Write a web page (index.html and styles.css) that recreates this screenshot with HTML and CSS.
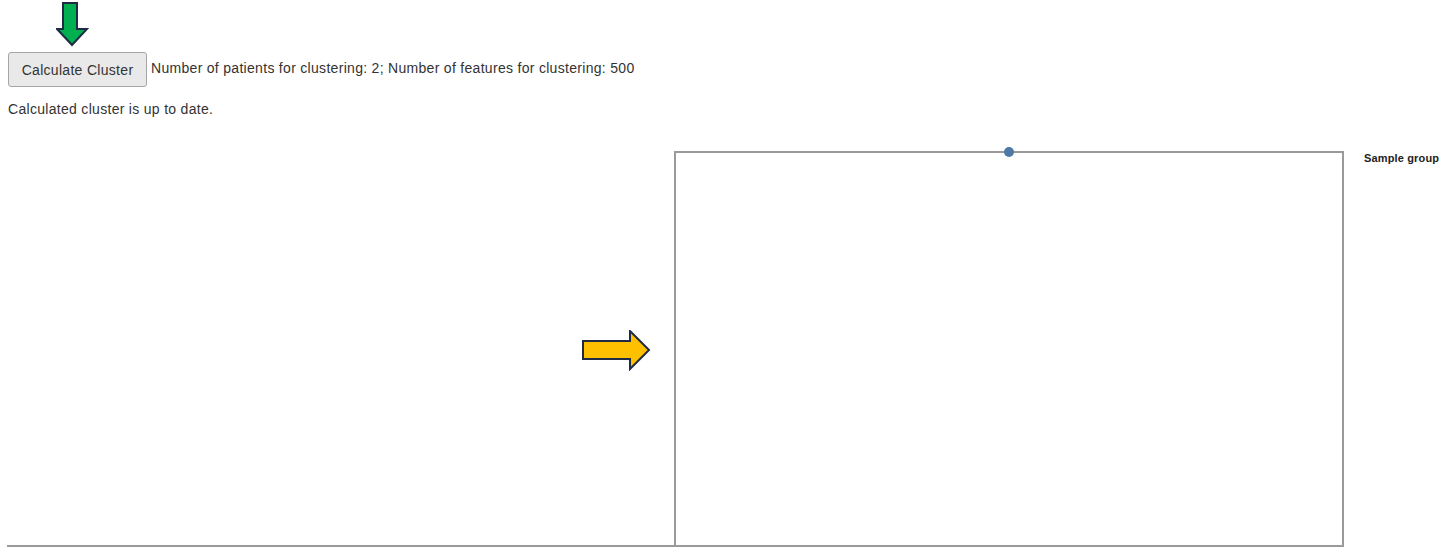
FILE: index.html
```html
<!DOCTYPE html>
<html>
<head>
<meta charset="utf-8">
<link rel="stylesheet" href="styles.css">
</head>
<body>
<div class="page">
  <div class="toolbar">
    <button class="btn">Calculate Cluster</button>
    <span class="info">Number of patients for clustering: 2; Number of features for clustering: 500</span>
  </div>
  <div class="status">Calculated cluster is up to date.</div>
  <div class="chart">
    <div class="plotarea">
      <div class="frame"><span class="dot"></span></div>
    </div>
    <div class="legend">Sample group</div>
  </div>
</div>
<svg class="arrow-down" width="33" height="45" viewBox="0 0 33 45"><path d="M7,1 H21 V27 H31 L16,43 L1,27 H7 Z" fill="#00b050" stroke="#1f2a44" stroke-width="2" stroke-linejoin="miter"/></svg>
<svg class="arrow-right" width="69" height="41" viewBox="0 0 69 41"><path d="M1,11 H48 V1 L67,20 L48,39 V29 H1 Z" fill="#ffc000" stroke="#1f2a44" stroke-width="2" stroke-linejoin="miter"/></svg>
</body>
</html>
```
FILE: styles.css
```css
html, body { margin: 0; padding: 0; background: #fff; }
body { font-family: "Liberation Sans", Arial, sans-serif; font-size: 14px; color: #333; letter-spacing: 0.3px; }
.page { padding: 52px 0 0 8px; }
.toolbar { display: flex; align-items: center; gap: 4px; }
.btn {
  font-family: "Liberation Sans", Arial, sans-serif;
  font-size: 14px;
  letter-spacing: 0.3px;
  color: #333;
  height: 35px;
  width: 139px;
  padding: 0;
  background: #e9e9e9;
  border: 1px solid #a6a6a6;
  border-radius: 3px;
  box-sizing: border-box;
  padding-top: 1px;
}
.info { line-height: 16px; margin-top: -3px; }
.status { margin-top: 14px; line-height: 16px; }
.chart { display: flex; align-items: flex-start; margin-top: 34px; margin-left: -1px; }
.plotarea {
  width: 1337px;
  height: 394px;
  border-bottom: 2px solid #9a9a9a;
  display: flex;
  justify-content: flex-end;
}
.frame {
  width: 670px;
  height: 100%;
  box-sizing: border-box;
  border: 2px solid #9a9a9a;
  border-bottom: none;
  position: relative;
}
.dot {
  position: absolute;
  left: 50%;
  top: -1px;
  width: 10px;
  height: 10px;
  margin: -5px 0 0 -5px;
  border-radius: 50%;
  background: #4e79a7;
}
.legend { margin-left: 20px; margin-top: 1px; font-size: 11px; font-weight: bold; color: #222; white-space: nowrap; letter-spacing: 0.15px; }
.arrow-down { position: absolute; left: 56px; top: 2px; }
.arrow-right { position: absolute; left: 582px; top: 330px; }
```
